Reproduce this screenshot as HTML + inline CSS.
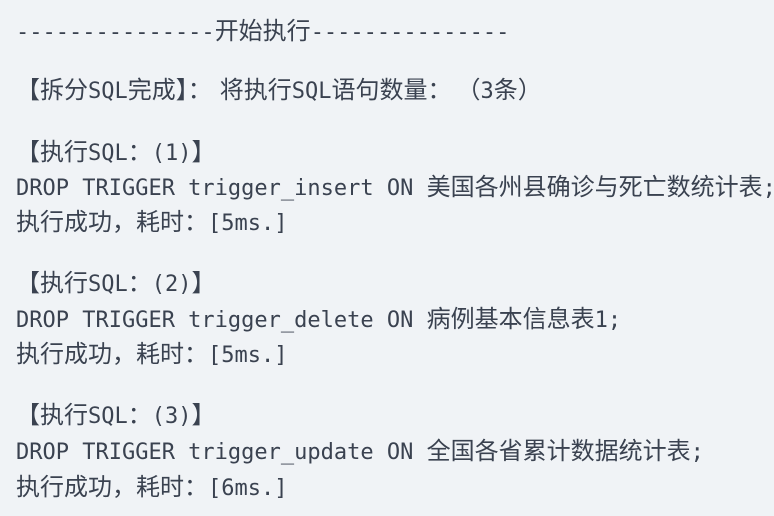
<!DOCTYPE html>
<html><head><meta charset="utf-8"><style>
html,body{margin:0;padding:0;background:#f0f3f6;width:774px;height:516px;overflow:hidden}
.l{position:absolute;left:16px;height:36px;line-height:36px;white-space:pre;font-family:"DejaVu Sans Mono","Liberation Mono","Noto Sans CJK SC",monospace;font-size:22px;color:#3a4250}
.c{font-family:"Noto Sans CJK SC",sans-serif;font-size:24px}
</style></head><body>
<div class="l" style="top:11px">---------------<span class="c">开始执行</span>---------------</div>
<div class="l" style="top:70px"><span class="c">【拆分</span>SQL<span class="c">完成】：</span><span style="display:inline-block;width:8px"></span><span class="c">将执行</span>SQL<span class="c">语句数量：</span><span style="display:inline-block;width:5px"></span><span class="c">（</span>3<span class="c">条）</span></div>
<div class="l" style="top:132px"><span class="c">【执行</span>SQL<span class="c">：</span>(1)<span class="c">】</span></div>
<div class="l" style="top:167px">DROP TRIGGER trigger_insert ON <span class="c">美国各州县确诊与死亡数统计表</span>;</div>
<div class="l" style="top:202px"><span class="c">执行成功，耗时：</span>[5ms.]</div>
<div class="l" style="top:263px"><span class="c">【执行</span>SQL<span class="c">：</span>(2)<span class="c">】</span></div>
<div class="l" style="top:299px">DROP TRIGGER trigger_delete ON <span class="c">病例基本信息表</span>1;</div>
<div class="l" style="top:334px"><span class="c">执行成功，耗时：</span>[5ms.]</div>
<div class="l" style="top:395px"><span class="c">【执行</span>SQL<span class="c">：</span>(3)<span class="c">】</span></div>
<div class="l" style="top:431px">DROP TRIGGER trigger_update ON <span class="c">全国各省累计数据统计表</span>;</div>
<div class="l" style="top:467px"><span class="c">执行成功，耗时：</span>[6ms.]</div>
</body></html>
